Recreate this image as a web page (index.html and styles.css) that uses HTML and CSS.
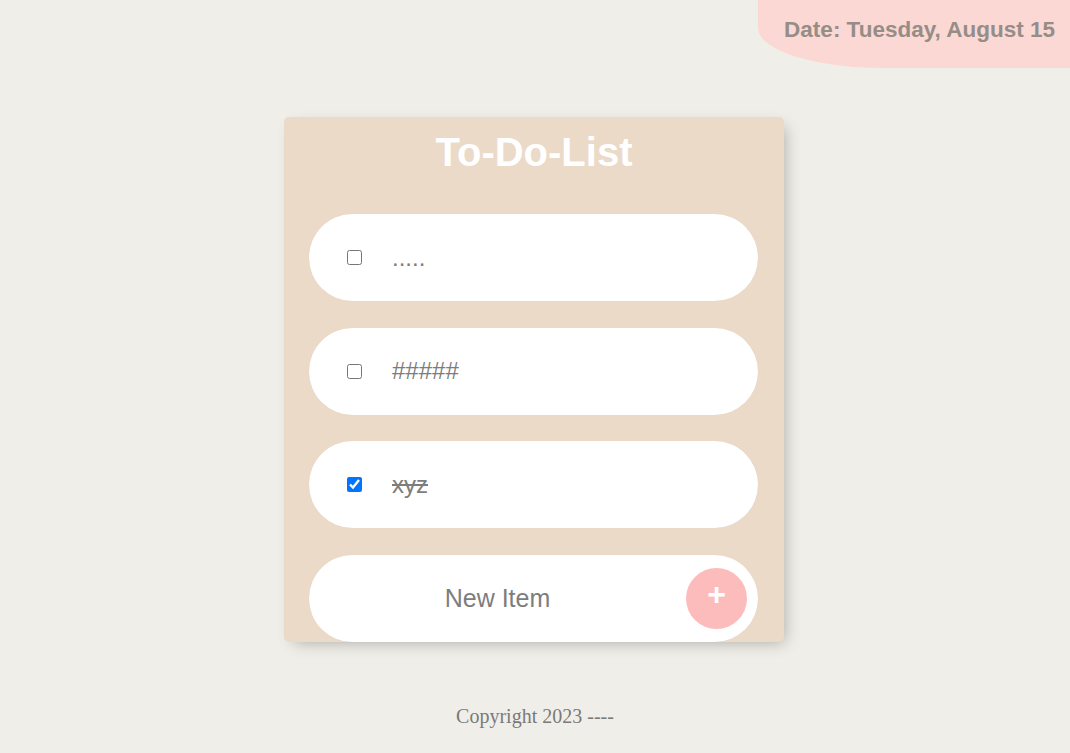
FILE: index.html
```html
<!DOCTYPE html>
<html lang="en">
<head>
<meta charset="utf-8">
<title>To-Do-List</title>
<link rel="stylesheet" href="styles.css">
</head>
<body>
  <header class="top">
    <div class="date">Date: Tuesday, August 15</div>
  </header>
  <main class="box">
    <h1 class="title">To-Do-List</h1>
    <div class="list">
      <div class="item">
        <input type="checkbox" class="check">
        <p class="text">.....</p>
      </div>
      <div class="item">
        <input type="checkbox" class="check">
        <p class="text">#####</p>
      </div>
      <div class="item">
        <input type="checkbox" class="check" checked>
        <p class="text done">xyz</p>
      </div>
      <form class="item new-item">
        <input type="text" class="new-input" placeholder="New Item" autocomplete="off">
        <button type="button" class="add">+</button>
      </form>
    </div>
  </main>
  <footer class="foot">Copyright 2023 ----</footer>
</body>
</html>
```
FILE: styles.css
```css
html, body {
  margin: 0;
  padding: 0;
}

body {
  background: #f0eee8;
  font-family: "Liberation Sans", Arial, sans-serif;
  min-height: 753px;
}

.top {
  display: flex;
  justify-content: flex-end;
}

.date {
  background: #fcd8d5;
  color: #958d86;
  font-weight: bold;
  font-size: 22.5px;
  line-height: 25px;
  height: 68px;
  box-sizing: border-box;
  padding: 17px 15px 0 26px;
  border-bottom-left-radius: 125px 40px;
}

.box {
  width: 500px;
  margin: 49px auto 0;
  background: #ebdac8;
  border-radius: 5px;
  box-shadow: 5px 5px 15px -5px rgba(0, 0, 0, 0.3);
  display: flex;
  flex-direction: column;
  transform: translateX(-1px);
}

.title {
  margin: 12px 0 39px;
  text-align: center;
  color: #ffffff;
  font-size: 40px;
  line-height: 46px;
  font-weight: bold;
}

.list {
  display: flex;
  flex-direction: column;
  gap: 26.5px;
  padding: 0 26px 0 25px;
}

.item {
  height: 87px;
  background: #ffffff;
  border-radius: 44px;
  display: flex;
  align-items: center;
  padding-left: 38px;
  gap: 30px;
  box-shadow: 0 0 1px rgba(0, 0, 0, 0.06);
}

.check {
  margin: 0;
  width: 15px;
  height: 15px;
}

.text {
  margin: 0;
  font-size: 24px;
  color: #7d7d7d;
}

.done {
  text-decoration: line-through;
}

.new-item {
  margin: 0;
  padding: 0 11px 0 0;
  gap: 0;
}

.new-input {
  flex: 1;
  min-width: 0;
  border: none;
  outline: none;
  background: transparent;
  text-align: center;
  font-family: "Liberation Sans", Arial, sans-serif;
  font-size: 25px;
  color: #7d7d7d;
  padding: 0;
  height: 40px;
}

.new-input::placeholder {
  color: #7d7d7d;
  opacity: 1;
}

.add {
  width: 61px;
  height: 61px;
  border-radius: 50%;
  border: none;
  background: #fdbcbc;
  color: #ffffff;
  font-family: "Liberation Sans", Arial, sans-serif;
  font-size: 32px;
  font-weight: bold;
  line-height: 1;
  padding: 0 0 8px;
  cursor: pointer;
}

.foot {
  margin-top: 63px;
  text-align: center;
  font-family: "Liberation Serif", "Times New Roman", serif;
  font-size: 20px;
  line-height: 23px;
  color: #7a7a7a;
}
```
